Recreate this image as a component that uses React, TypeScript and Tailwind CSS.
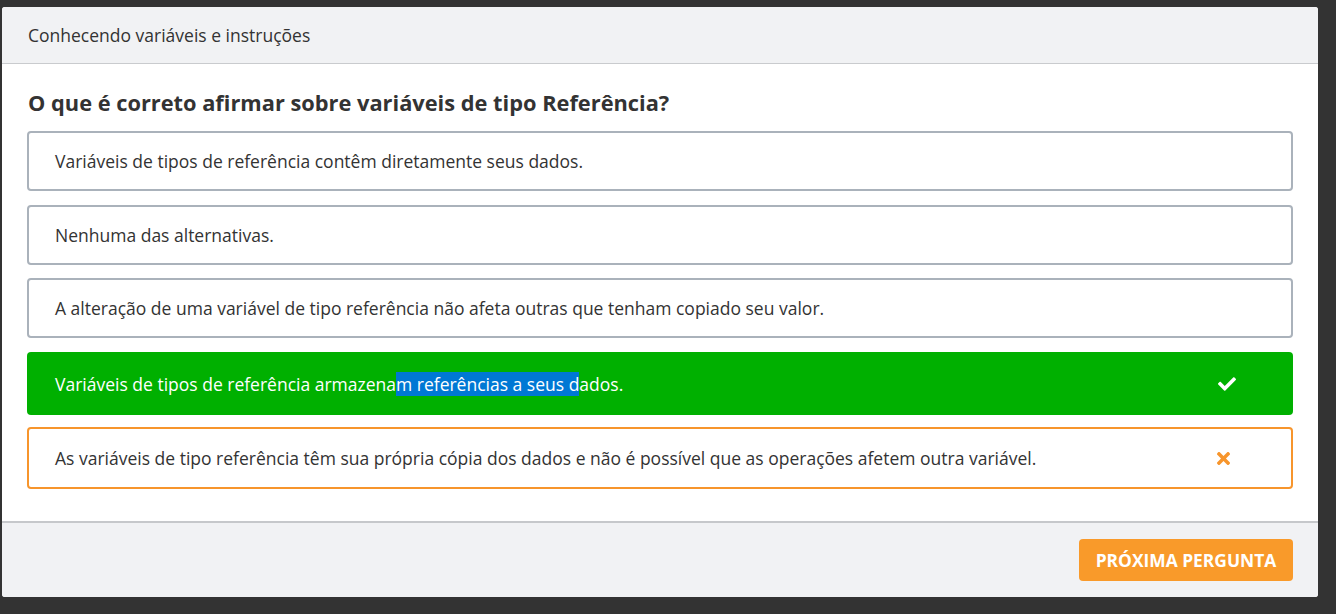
import { FaCheck, FaTimes } from "react-icons/fa";

type Option = {
  text: React.ReactNode;
  kind: "neutral" | "correct" | "wrong";
  className: string;
};

const options: Option[] = [
  {
    text: "Variáveis de tipos de referência contêm diretamente seus dados.",
    kind: "neutral",
    className: "",
  },
  { text: "Nenhuma das alternativas.", kind: "neutral", className: "mt-[14px]" },
  {
    text: "A alteração de uma variável de tipo referência não afeta outras que tenham copiado seu valor.",
    kind: "neutral",
    className: "mt-[13px]",
  },
  {
    text: (
      <>
        Variáveis de tipos de referência armazena
        <span className="bg-[#0078d4]">m referências a seus d</span>
        ados.
      </>
    ),
    kind: "correct",
    className: "mt-[14px]",
  },
  {
    text: "As variáveis de tipo referência têm sua própria cópia dos dados e não é possível que as operações afetem outra variável.",
    kind: "wrong",
    className: "mt-[12px]",
  },
];

function OptionRow({ opt }: { opt: Option }) {
  const base =
    "flex items-center justify-between rounded-[4px] pr-[57px] text-[17.5px] leading-6";
  if (opt.kind === "correct") {
    return (
      <div
        className={`${base} ${opt.className} h-[63px] bg-[#00b000] pl-[28px] font-medium text-white`}
      >
        <span>{opt.text}</span>
        <FaCheck className="h-[18px] w-[18px] text-white" />
      </div>
    );
  }
  if (opt.kind === "wrong") {
    return (
      <div
        className={`${base} ${opt.className} h-[62px] border-2 border-[#f7952c] bg-white pl-[26px] text-[#333]`}
      >
        <span>{opt.text}</span>
        <FaTimes className="mr-[1px] h-[19px] w-[19px] text-[#f7952c]" />
      </div>
    );
  }
  return (
    <div
      className={`${base} ${opt.className} h-[60px] border-2 border-[#aab2bb] bg-white pl-[26px] text-[#333]`}
    >
      <span>{opt.text}</span>
    </div>
  );
}

export default function App() {
  return (
    <div
      className="h-[614px] w-[1336px] bg-[#333333] pl-[2px] pt-[7px]"
      style={{ fontFamily: '"Open Sans", "Noto Sans", sans-serif' }}
    >
      <div className="w-[1316px] overflow-hidden rounded-[3px] bg-white">
        <div className="flex h-[57px] items-center border-b border-[#c9cbce] bg-[#f1f2f4] px-[26px] pt-[1px]">
          <span className="text-[17.5px] text-[#333]">
            Conhecendo variáveis e instruções
          </span>
        </div>

        <div className="px-[25px] pb-[32px] pt-[25px]">
          <h1 className="ml-[1px] text-[21.8px] font-bold leading-7 text-[#333]">
            O que é correto afirmar sobre variáveis de tipo Referência?
          </h1>
          <div className="mt-[14px] flex flex-col">
            {options.map((opt, i) => (
              <OptionRow key={i} opt={opt} />
            ))}
          </div>
        </div>

        <div className="flex h-[76px] justify-end border-t-2 border-[#c6c8cb] bg-[#f1f2f4] pr-[25px] pt-[16px]">
          <button
            type="button"
            className="h-[42px] w-[214px] rounded-[4px] bg-[#f99a2a] text-[17.4px] font-bold uppercase text-white"
          >
            Próxima pergunta
          </button>
        </div>
      </div>
    </div>
  );
}
